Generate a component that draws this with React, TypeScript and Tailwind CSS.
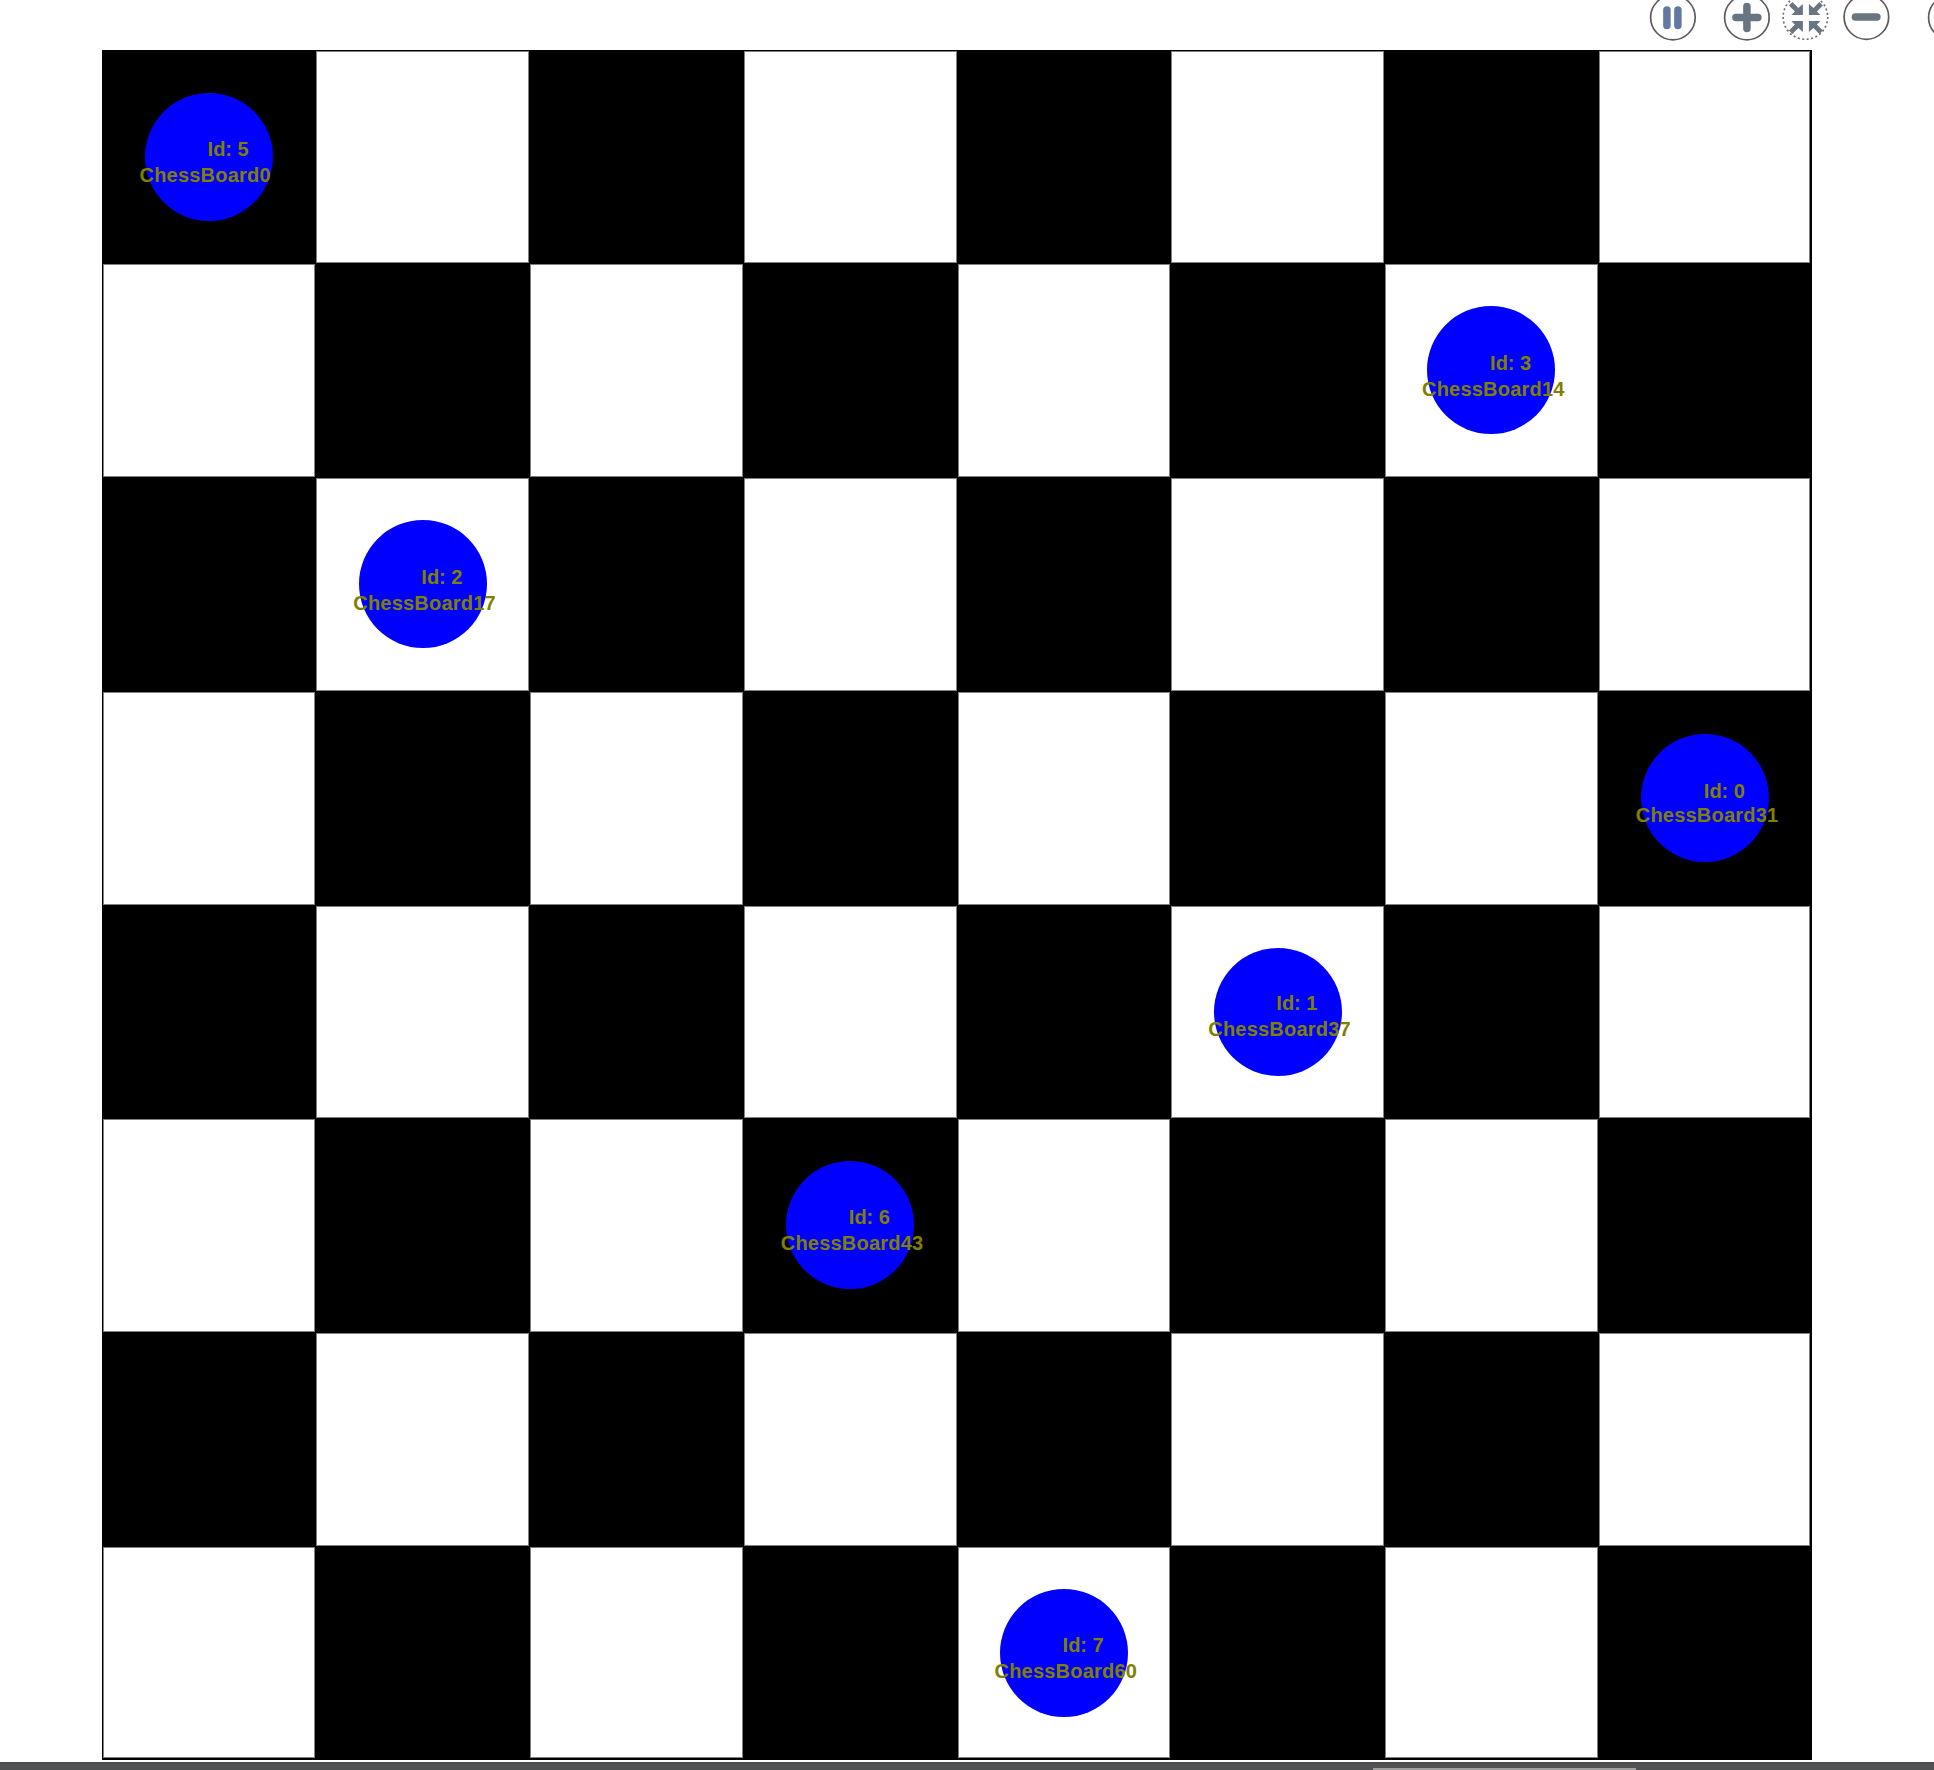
const RING = '#5c5c5c';

type Queen = { id: number; cell: number; idTop: number; nameTop: number };

const queens: Queen[] = [
  { id: 5, cell: 0, idTop: 88.4, nameTop: 114.4 },
  { id: 3, cell: 14, idTop: 88.65, nameTop: 114.65 },
  { id: 2, cell: 17, idTop: 88.9, nameTop: 114.9 },
  { id: 0, cell: 31, idTop: 89.15, nameTop: 113.15 },
  { id: 1, cell: 37, idTop: 87.4, nameTop: 113.4 },
  { id: 6, cell: 43, idTop: 87.65, nameTop: 113.65 },
  { id: 7, cell: 60, idTop: 88.15, nameTop: 114.15 },
];

function Piece({ q }: { q: Queen }) {
  return (
    <>
      <div className="absolute left-[43.2px] top-[43.1px] z-10 size-32 rounded-full bg-[#0000ff]" />
      <span
        className="absolute left-[106px] z-20 whitespace-nowrap text-[20px] leading-[22px]"
        style={{ top: q.idTop }}
      >
        Id: {q.id}
      </span>
      <span
        className="absolute left-[37.9px] z-20 whitespace-nowrap text-[20px] leading-[22px] tracking-[0.22px]"
        style={{ top: q.nameTop }}
      >
        ChessBoard{q.cell}
      </span>
    </>
  );
}

function Cell({ index }: { index: number }) {
  const row = Math.floor(index / 8);
  const col = index % 8;
  const dark = (row + col) % 2 === 0;
  const queen = queens.find((q) => q.cell === index);
  return (
    <div
      className={`relative bg-black ${dark ? '' : 'pl-px pt-px'} ${!dark && col === 7 ? 'pr-[2px]' : ''} ${!dark && row === 7 ? 'pb-[2px]' : ''}`}
    >
      {!dark && <div className="h-full border border-[#808080] bg-white" />}
      {queen && <Piece q={queen} />}
    </div>
  );
}

function Toolbar() {
  return (
    <svg className="block h-[49.6px] w-[1934px] shrink-0" viewBox="0 0 1934 49.6" fill="none">
      <g stroke={RING} strokeWidth="1.7">
        <circle cx="1673" cy="17.5" r="22.3" />
        <circle cx="1747" cy="17.5" r="22.3" />
        <circle cx="1805.5" cy="17" r="22.3" strokeDasharray="2 2.5" stroke="#707070" />
        <circle cx="1866.5" cy="17" r="22.3" />
        <circle cx="1951" cy="17.5" r="22.3" />
      </g>
      <g stroke="#6278a3" strokeWidth="7.5" strokeLinecap="round">
        <path d="M1667 10V25.5M1678 10V25.5" />
      </g>
      <g stroke="#697580" strokeWidth="7.5" strokeLinecap="round">
        <path d="M1736 17.5H1758M1747 6.5V28.5M1855.5 17H1877" />
      </g>
      <g fill="#697580">
        <path d="M1803 15H1791.5L1795 11.5L1789 5.5L1792.5 2L1798.5 8L1803 4Z" />
        <path d="M1809 15H1820.5L1817 11.5L1823 5.5L1819.5 2L1813.5 8L1809 4Z" />
        <path d="M1803 21H1791.5L1795 24.5L1789 30.5L1792.5 34L1798.5 28L1803 32Z" />
        <path d="M1809 21H1820.5L1817 24.5L1823 30.5L1819.5 34L1813.5 28L1809 32Z" />
      </g>
    </svg>
  );
}

export default function App() {
  return (
    <div className="flex h-[1770px] w-[1934px] flex-col overflow-hidden bg-white">
      <Toolbar />
      <div className="ml-[101.6px] grid h-[1710px] w-[1710px] shrink-0 grid-cols-8 grid-rows-8 font-['Liberation_Sans',Arial,sans-serif] font-bold text-[#808000]">
        {Array.from({ length: 64 }, (_, i) => (
          <Cell key={i} index={i} />
        ))}
      </div>
      <div className="mt-[2.4px] flex h-2 shrink-0 items-end border-t-2 border-[#4b4c4f] bg-[#505354]">
        <div className="ml-[1373px] h-[2px] w-[263px] bg-[#a0a0a0]" />
      </div>
    </div>
  );
}
